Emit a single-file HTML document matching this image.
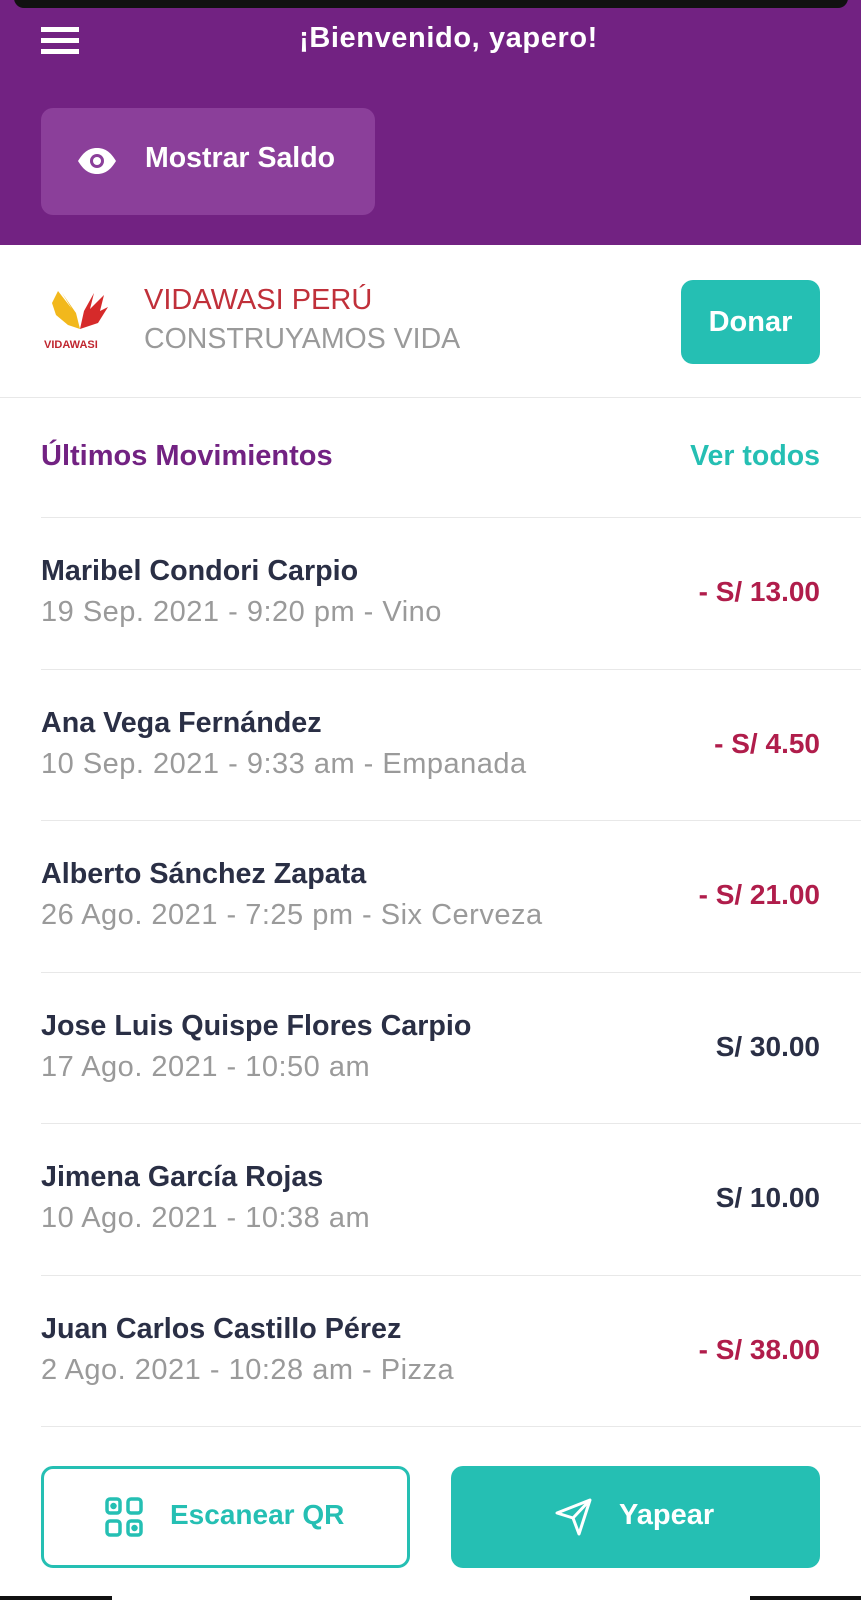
<!DOCTYPE html>
<html><head><meta charset="utf-8"><style>
*{margin:0;padding:0;box-sizing:border-box}
body{width:861px;height:1600px;background:#fff;font-family:"Liberation Sans",sans-serif;position:relative;overflow:hidden}
.top{position:absolute;left:0;top:0;width:861px;height:245px;background:#722282}
.bar{position:absolute;left:14px;top:-12px;width:834px;height:20px;background:#111;border-radius:10px}
.ham{position:absolute;left:41px;width:38px;height:5px;background:#fff}
.title{position:absolute;top:22px;left:0;width:861px;text-align:center;color:#fff;font-size:29px;font-weight:bold;letter-spacing:0.6px;padding-left:36px}
.show{position:absolute;left:41px;top:108px;width:334px;height:107px;background:#8b3f9a;border-radius:12px;color:#fff;font-size:28.5px;font-weight:bold}
.abs{position:absolute}
.row .n{position:absolute;left:41px;font-size:28.7px;font-weight:bold;color:#2a2f45}
.row .s{position:absolute;left:41px;font-size:29px;letter-spacing:0.5px;color:#9a9a9a}
.row .a{position:absolute;right:41px;font-size:28px;font-weight:bold}
.line{position:absolute;left:41px;right:0;height:1px;background:#e8e8e8}
.red{color:#b01d4b}.dark{color:#2a2f45}
</style></head><body>
<div class="top">
 <div class="bar"></div>
 <div class="ham" style="top:27px"></div><div class="ham" style="top:38px"></div><div class="ham" style="top:49px"></div>
 <div class="title">¡Bienvenido, yapero!</div>
 <div class="show">
  <svg class="abs" style="left:35px;top:38px" width="42" height="30" viewBox="0 0 42 30"><path d="M2 15C8 5 14 2 21 2S34 5 40 15C34 25 28 28 21 28S8 25 2 15Z" fill="#fff"/><circle cx="21" cy="15" r="7" fill="#8b3f9a"/><circle cx="21" cy="15" r="4" fill="#fff"/></svg>
  <div class="abs" style="left:104px;top:34px">Mostrar Saldo</div>
 </div>
</div>
<svg class="abs" style="left:50px;top:289px" width="60" height="44" viewBox="0 0 60 44"><path d="M8 2L22 20L12 4L26 24L30 40L18 36L6 26L2 14Z" fill="#f2b81c"/><path d="M30 40L34 22L44 4L40 20L54 6L50 22L58 18L48 34Z" fill="#d62a2a"/></svg>
<div class="abs" style="left:44px;top:339px;font-size:11px;font-weight:bold;color:#c0262f">VIDAWASI</div>
<div class="abs" style="left:144px;top:284px;font-size:29px;color:#c0303a">VIDAWASI PERÚ</div>
<div class="abs" style="left:144px;top:323px;font-size:28.5px;color:#9a9a9a">CONSTRUYAMOS VIDA</div>
<div class="abs" style="left:681px;top:280px;width:139px;height:84px;background:#25bfb3;border-radius:12px;color:#fff;font-size:29px;font-weight:bold;text-align:center;line-height:84px">Donar</div>
<div class="abs" style="left:0;right:0;top:397px;height:1px;background:#e8e8e8"></div>
<div class="abs" style="left:41px;top:440px;font-size:29px;font-weight:bold;color:#722282">Últimos Movimientos</div>
<div class="abs" style="right:41px;top:440px;font-size:28.5px;font-weight:bold;color:#25bfb3">Ver todos</div>
<div class="line" style="top:517px"></div>

<div class="row" style="position:absolute;left:0;right:0;top:517px;height:152px">
 <div class="n" style="top:38px">Maribel Condori Carpio</div><div class="s" style="top:79px">19 Sep. 2021 - 9:20 pm - Vino</div><div class="a red" style="top:59px">- S/ 13.00</div></div>
<div class="line" style="top:669px"></div>
<div class="row" style="position:absolute;left:0;right:0;top:669px;height:152px">
 <div class="n" style="top:38px">Ana Vega Fernández</div><div class="s" style="top:79px">10 Sep. 2021 - 9:33 am - Empanada</div><div class="a red" style="top:59px">- S/ 4.50</div></div>
<div class="line" style="top:820px"></div>
<div class="row" style="position:absolute;left:0;right:0;top:820px;height:152px">
 <div class="n" style="top:38px">Alberto Sánchez Zapata</div><div class="s" style="top:79px">26 Ago. 2021 - 7:25 pm - Six Cerveza</div><div class="a red" style="top:59px">- S/ 21.00</div></div>
<div class="line" style="top:972px"></div>
<div class="row" style="position:absolute;left:0;right:0;top:972px;height:152px">
 <div class="n" style="top:38px">Jose Luis Quispe Flores Carpio</div><div class="s" style="top:79px">17 Ago. 2021 - 10:50 am</div><div class="a dark" style="top:59px">S/ 30.00</div></div>
<div class="line" style="top:1123px"></div>
<div class="row" style="position:absolute;left:0;right:0;top:1123px;height:152px">
 <div class="n" style="top:38px">Jimena García Rojas</div><div class="s" style="top:79px">10 Ago. 2021 - 10:38 am</div><div class="a dark" style="top:59px">S/ 10.00</div></div>
<div class="line" style="top:1275px"></div>
<div class="row" style="position:absolute;left:0;right:0;top:1275px;height:152px">
 <div class="n" style="top:38px">Juan Carlos Castillo Pérez</div><div class="s" style="top:79px">2 Ago. 2021 - 10:28 am - Pizza</div><div class="a red" style="top:59px">- S/ 38.00</div></div>
<div class="line" style="top:1426px"></div>

<div class="abs" style="left:41px;top:1466px;width:369px;height:102px;border:3px solid #25bfb3;border-radius:12px"></div>
<svg class="abs" style="left:105px;top:1497px" width="38" height="40" viewBox="0 0 38 40" fill="none" stroke="#25bfb3" stroke-width="3.5"><rect x="2" y="2" width="13" height="14" rx="3"/><rect x="23" y="2" width="13" height="14" rx="3"/><rect x="2" y="24" width="13" height="14" rx="3"/><rect x="23" y="24" width="13" height="14" rx="3"/><circle cx="8.5" cy="9" r="1.5" fill="#25bfb3"/><circle cx="29.5" cy="31" r="1.5" fill="#25bfb3"/></svg>
<div class="abs" style="left:170px;top:1499px;font-size:28px;font-weight:bold;color:#25bfb3">Escanear QR</div>
<div class="abs" style="left:451px;top:1466px;width:369px;height:102px;background:#25bfb3;border-radius:12px"></div>
<svg class="abs" style="left:554px;top:1497px" width="40" height="40" viewBox="0 0 40 40" fill="none" stroke="#fff" stroke-width="3" stroke-linejoin="round"><path d="M3 16L36 3L25 37L19 21Z"/><path d="M19 21L36 3"/></svg>
<div class="abs" style="left:619px;top:1499px;font-size:29px;font-weight:bold;color:#fff">Yapear</div>
<div class="abs" style="left:0;top:1596px;width:112px;height:4px;background:#111"></div>
<div class="abs" style="left:750px;top:1596px;width:111px;height:4px;background:#111"></div>
</body></html>
